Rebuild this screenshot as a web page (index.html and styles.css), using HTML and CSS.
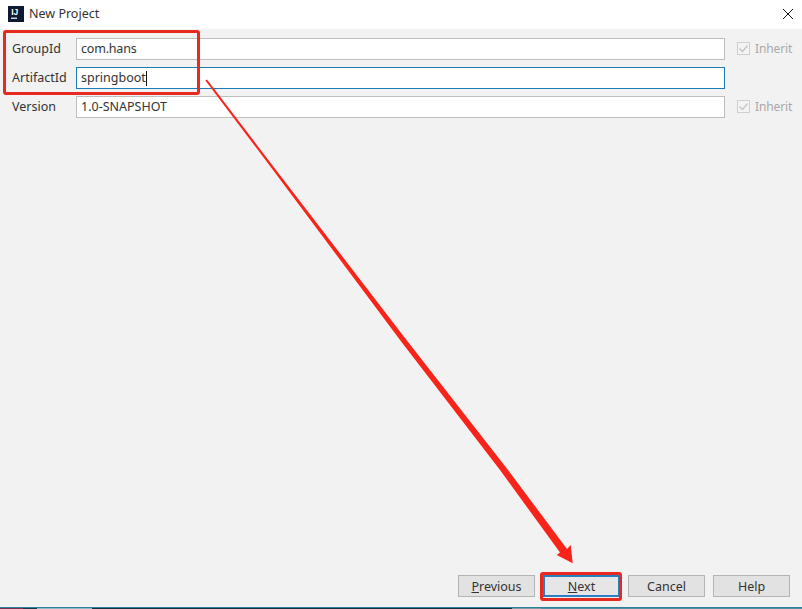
FILE: index.html
```html
<!DOCTYPE html>
<html lang="en">
<head>
<meta charset="utf-8">
<title>New Project</title>
<link rel="stylesheet" href="styles.css">
</head>
<body>
<div class="dialog">
  <header class="titlebar">
    <svg class="app-icon" width="16" height="16" viewBox="0 0 16 16"><rect width="16" height="16" fill="#0c1a33"/><rect x="3" y="11.6" width="6" height="1.2" fill="#fff"/><text x="3.2" y="9.4" class="app-letters">IJ</text></svg>
    <span class="title">New Project</span>
    <svg class="close" width="12" height="12" viewBox="0 0 12 12"><path d="M1 1l10 10M11 1L1 11" stroke="#111" stroke-width="1" fill="none"/></svg>
  </header>
  <main class="form">
    <label class="label">GroupId</label>
    <div class="field tight">com.hans</div>
    <div class="inherit"><span class="check"><svg width="11" height="11" viewBox="0 0 11 11"><path d="M1.5 5.5l3 3 5-6" stroke="#c4c4c4" stroke-width="1.3" fill="none"/></svg></span>Inherit</div>
    <label class="label">ArtifactId</label>
    <div class="field focus">springboot<span class="caret"></span></div>
    <div></div>
    <label class="label">Version</label>
    <div class="field">1.0-SNAPSHOT</div>
    <div class="inherit"><span class="check"><svg width="11" height="11" viewBox="0 0 11 11"><path d="M1.5 5.5l3 3 5-6" stroke="#c4c4c4" stroke-width="1.3" fill="none"/></svg></span>Inherit</div>
  </main>
  <footer class="buttons">
    <button class="btn"><u>P</u>revious</button>
    <button class="btn primary"><u>N</u>ext</button>
    <button class="btn">Cancel</button>
    <button class="btn">Help</button>
  </footer>
  <div class="taskbar"><span class="t1"></span><span class="t2"></span><span class="t3"></span><span class="t4"></span><span class="t5"></span><span class="t6"></span></div>
</div>
<div class="mark mark-fields"></div>
<div class="mark mark-next"></div>
<svg class="arrow" width="802" height="609" viewBox="0 0 802 609">
  <path d="M207 79.5L276 170L406.5 340L508 470L567 549L570.7 545L572.7 563.3L556.7 555L560 552.5L500 470L400 340L273 170L205.4 80.5Z" fill="#f8241a"/>
</svg>
</body>
</html>
```
FILE: styles.css
```css
* { box-sizing: border-box; }
html, body { margin: 0; padding: 0; }
body {
  width: 802px;
  height: 609px;
  overflow: hidden;
  position: relative;
  font-family: "Noto Sans", "Open Sans", sans-serif;
  font-size: 12.5px;
  color: #333;
}
.dialog {
  height: 609px;
  display: flex;
  flex-direction: column;
  background: #f2f2f2;
}
.titlebar {
  height: 29px;
  flex: none;
  display: flex;
  align-items: center;
  background: #fff;
  padding: 0 8px 2px 8px;
  gap: 5px;
}
.app-letters { font: bold 8.5px "Liberation Sans", sans-serif; fill: #fff; }
.title { flex: 1; font-size: 12.5px; }
.form {
  flex: 1;
  display: grid;
  grid-template-columns: 64px 649px 1fr;
  grid-auto-rows: 22px;
  row-gap: 7px;
  padding: 9px 0 0 12px;
  align-items: center;
}
.label { line-height: 22px; }
.field {
  height: 22px;
  line-height: 20px;
  background: #fff;
  border: 1px solid #bdbdbd;
  padding-left: 4px;
  display: flex;
  align-items: center;
}
.field.tight { letter-spacing: -0.2px; }
.field.focus { border-color: #1c7cb8; }
.caret { width: 1px; height: 15px; background: #111; }
.inherit {
  display: flex;
  align-items: center;
  color: #a9a9a9;
  padding-left: 12px;
  gap: 5px;
  font-size: 12px;
  letter-spacing: -0.1px;
  margin-top: -1px;
}
.check {
  width: 13px;
  height: 13px;
  border: 1px solid #cfcfcf;
  background: #f4f4f4;
  display: flex;
  align-items: center;
  justify-content: center;
}
.buttons {
  flex: none;
  display: flex;
  justify-content: flex-end;
  gap: 8px;
  padding: 0 12px 10px 0;
}
.btn {
  width: 77px;
  height: 22px;
  padding: 0;
  font: inherit;
  color: #333;
  background: #e2e2e2;
  border: 1px solid #b5b5b5;
}
.btn.primary { border: 2px solid #2a7fc0; background: #e6e6e6; }
.taskbar {
  height: 2px;
  flex: none;
  display: flex;
  background: #0f6f86;
  border-top: 1px solid #2a8296;
}
.taskbar span { height: 1px; }
.t1 { width: 23px; background: #7a2f52; }
.t2 { width: 14px; background: #16384a; }
.t3 { width: 55px; background: #8fb8c8; }
.t4 { width: 420px; background: #12303f; }
.t5 { width: 29px; background: #7f9aa6; }
.t6 { flex: 1; background: #4f8ea3; }
.mark {
  position: absolute;
  border: 3px solid #e8291f;
  border-radius: 3px;
}
.mark-fields { left: 3px; top: 30px; width: 197px; height: 65px; }
.mark-next { left: 540px; top: 572px; width: 82px; height: 29px; }
.arrow { position: absolute; left: 0; top: 0; pointer-events: none; }
```
